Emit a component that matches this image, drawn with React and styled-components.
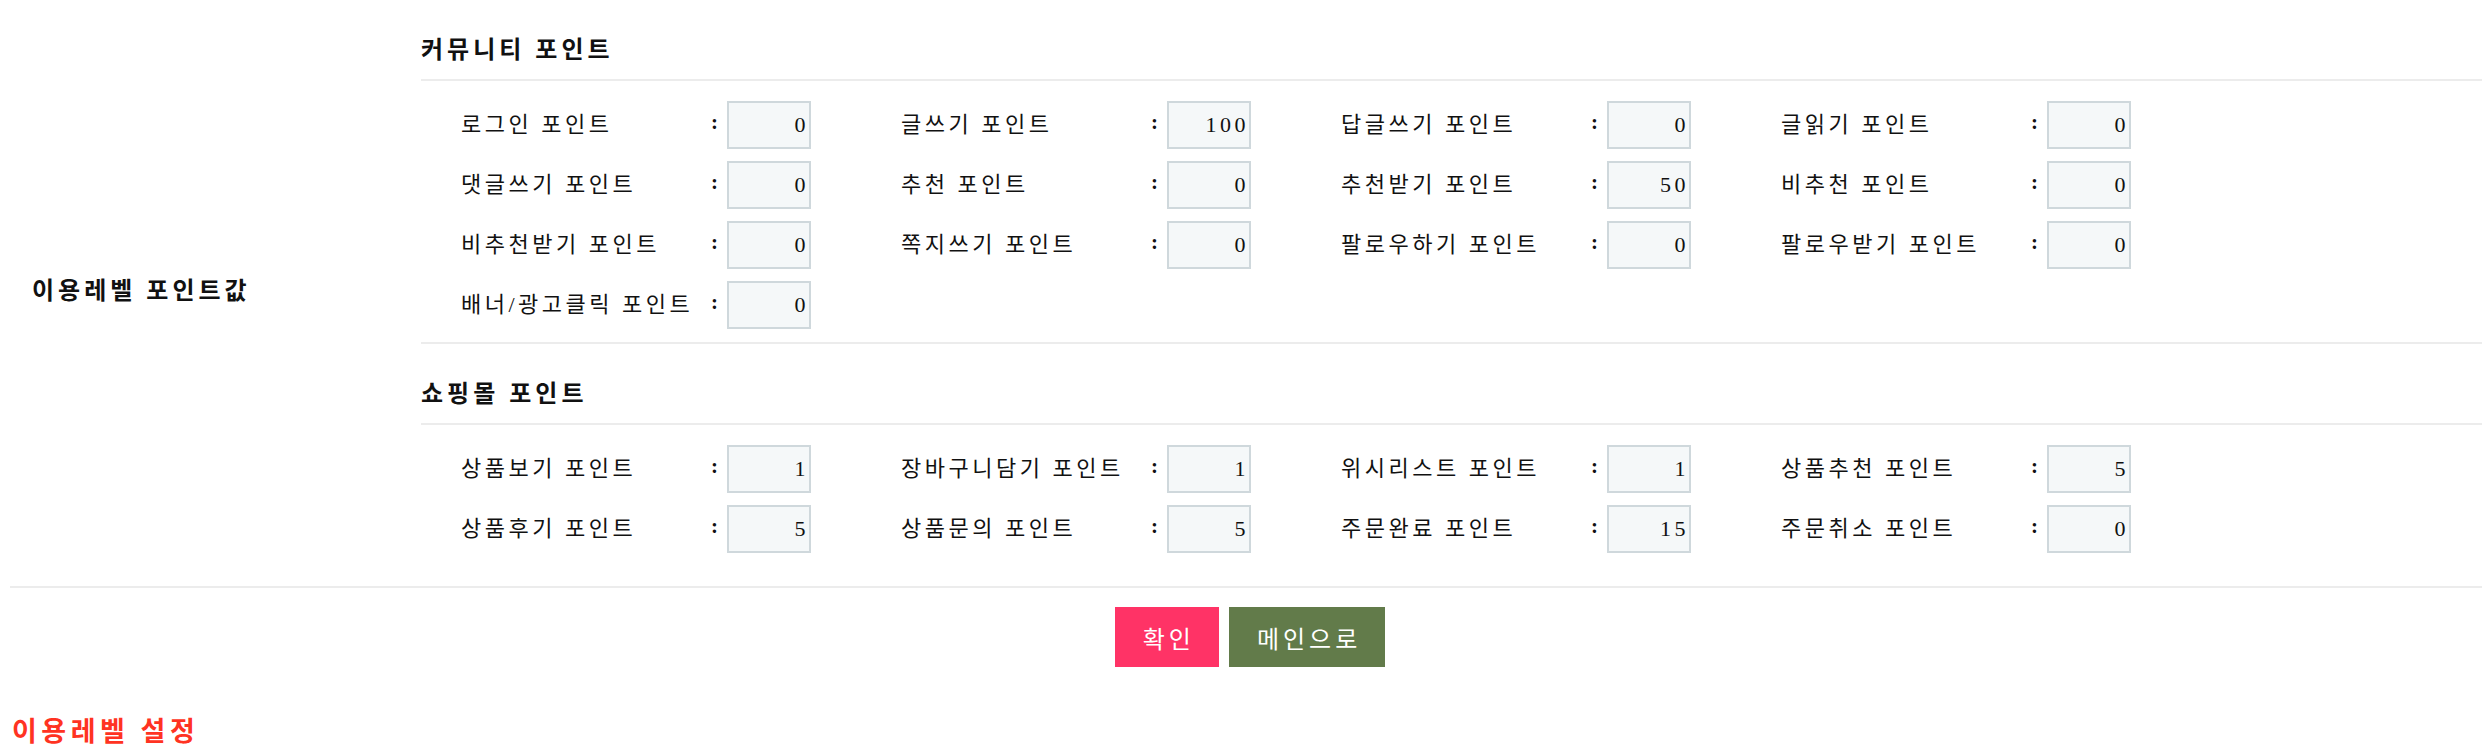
import React from 'react';
import styled, { createGlobalStyle } from 'styled-components';

const GlobalStyle = createGlobalStyle`
    html, body {
        margin: 0;
        padding: 0;
        background: #fff;
        overflow: hidden;
    }
    body {
        font-family: 'Liberation Serif', 'Noto Sans CJK KR', serif;
        color: #111;
    }
`;

// 포인트 항목 데이터
const communityPoints = [
    { label: '로그인 포인트', value: '0' },
    { label: '글쓰기 포인트', value: '100' },
    { label: '답글쓰기 포인트', value: '0' },
    { label: '글읽기 포인트', value: '0' },
    { label: '댓글쓰기 포인트', value: '0' },
    { label: '추천 포인트', value: '0' },
    { label: '추천받기 포인트', value: '50' },
    { label: '비추천 포인트', value: '0' },
    { label: '비추천받기 포인트', value: '0' },
    { label: '쪽지쓰기 포인트', value: '0' },
    { label: '팔로우하기 포인트', value: '0' },
    { label: '팔로우받기 포인트', value: '0' },
    { label: '배너/광고클릭 포인트', value: '0' },
];

const shopPoints = [
    { label: '상품보기 포인트', value: '1' },
    { label: '장바구니담기 포인트', value: '1' },
    { label: '위시리스트 포인트', value: '1' },
    { label: '상품추천 포인트', value: '5' },
    { label: '상품후기 포인트', value: '5' },
    { label: '상품문의 포인트', value: '5' },
    { label: '주문완료 포인트', value: '15' },
    { label: '주문취소 포인트', value: '0' },
];

const PointSection = ({ title, items, divider }) => (
    <Section>
        <SectionTitle>{title}</SectionTitle>
        <ItemGrid divider={divider}>
            {items.map((item) => (
                <Item key={item.label}>
                    <Label>{item.label}</Label>
                    <Colon>:</Colon>
                    <PointInput type="text" defaultValue={item.value} />
                </Item>
            ))}
        </ItemGrid>
    </Section>
);

const App = () => {
    return (
        <>
            <GlobalStyle />
            <Page>
                <FormTable>
                    <HeadCell>이용레벨 포인트값</HeadCell>
                    <BodyCell>
                        <PointSection
                            title="커뮤니티 포인트"
                            items={communityPoints}
                            divider
                        />
                        <PointSection title="쇼핑몰 포인트" items={shopPoints} />
                    </BodyCell>
                </FormTable>
                <ButtonRow>
                    <ActionButton type="button" color="#ff3366">
                        확인
                    </ActionButton>
                    <ActionButton type="button" color="#627b4a">
                        메인으로
                    </ActionButton>
                </ButtonRow>
                <PageTitle>이용레벨 설정</PageTitle>
            </Page>
        </>
    );
};

const Page = styled.div`
    padding-left: 10px;
`;

const FormTable = styled.div`
    display: grid;
    grid-template-columns: 411px 1fr;
    border-bottom: 2px solid #ececec;
`;

const HeadCell = styled.div`
    display: flex;
    align-items: center;
    padding: 0 0 10px 22px;
    font-size: 24px;
    font-weight: bold;
    letter-spacing: 4px;
`;

const BodyCell = styled.div`
    padding-bottom: 20px;
`;

const Section = styled.div``;

const SectionTitle = styled.div`
    padding: 30px 0 9px;
    line-height: 40px;
    font-size: 24px;
    font-weight: bold;
    letter-spacing: 4px;
    border-bottom: 2px solid #ececec;
`;

const ItemGrid = styled.div`
    display: grid;
    grid-template-columns: repeat(4, 440px);
    row-gap: 12px;
    padding: 20px 0 13px 40px;
    border-bottom: ${(props) => (props.divider ? '2px solid #ececec' : 'none')};
`;

const Item = styled.div`
    display: flex;
    align-items: center;
    height: 48px;
`;

const Label = styled.span`
    width: 250px;
    font-size: 22px;
    letter-spacing: 3.5px;
    white-space: nowrap;
    margin-top: -6px;
`;

const Colon = styled.span`
    width: 16px;
    font-size: 21px;
    font-weight: bold;
    margin-top: -6px;
`;

const PointInput = styled.input`
    box-sizing: border-box;
    width: 84px;
    height: 48px;
    padding: 0;
    border: 2px solid #cfd8dc;
    background: #f5f8f9;
    text-align: right;
    font-family: 'Liberation Serif', serif;
    font-size: 22px;
    letter-spacing: 3.5px;
    color: #111;
    outline: none;
`;

const ButtonRow = styled.div`
    display: flex;
    justify-content: center;
    gap: 10px;
    margin-top: 19px;
    padding-left: 8px;
`;

const ActionButton = styled.button`
    height: 60px;
    padding: 0 24px 0 28px;
    border: 0;
    background: ${(props) => props.color};
    color: #fff;
    font-family: 'Liberation Serif', 'Noto Sans CJK KR', serif;
    font-size: 24px;
    letter-spacing: 4px;
    cursor: pointer;
`;

const PageTitle = styled.h2`
    margin: 47px 0 0;
    padding-left: 2px;
    line-height: 36px;
    font-size: 27px;
    font-weight: bold;
    letter-spacing: 4.5px;
    color: #ff3322;
`;

export default App;
